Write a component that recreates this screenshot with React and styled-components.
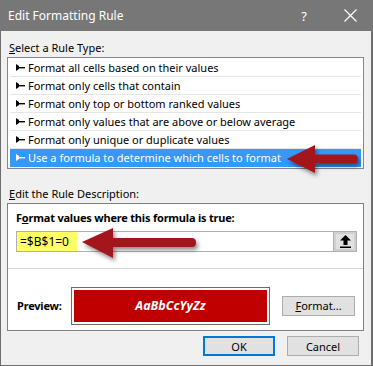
import React from 'react'
import styled, { createGlobalStyle } from 'styled-components'

const GlobalStyle = createGlobalStyle`
  html, body {
    margin: 0;
    padding: 0;
    background: #f0f0f0;
  }
  body {
    font-family: "Noto Sans", "Liberation Sans", sans-serif;
    font-size: 11px;
    color: #000;
  }
`

const rules = [
  'Format all cells based on their values',
  'Format only cells that contain',
  'Format only top or bottom ranked values',
  'Format only values that are above or below average',
  'Format only unique or duplicate values',
  'Use a formula to determine which cells to format',
]

const Bullet = ({ light }) => (
  <svg width="9" height="7" viewBox="0 0 9 7">
    <polygon points="0,0 3,2 3,5 0,7" fill={light ? '#fff' : '#000'} />
    <rect x="3" y="3" width="6" height="1.4" fill={light ? '#fff' : '#000'} />
  </svg>
)

const Arrow = ({ left, top, width, height, tip, headEnd, shaftTop, shaftBottom }) => (
  <ArrowSvg
    style={{ left, top }}
    width={width + 8}
    height={height + 8}
    viewBox={`0 0 ${width + 8} ${height + 8}`}
  >
    <defs>
      <filter id={`sh${left}`} x="-20%" y="-30%" width="150%" height="180%">
        <feDropShadow dx="2" dy="3" stdDeviation="2" floodColor="#000" floodOpacity="0.45" />
      </filter>
    </defs>
    <path
      d={`M0 ${tip} L${headEnd} 0 L${headEnd} ${shaftTop} L${width - 4} ${shaftTop}
          Q${width} ${shaftTop} ${width} ${(shaftTop + shaftBottom) / 2}
          Q${width} ${shaftBottom} ${width - 4} ${shaftBottom}
          L${headEnd} ${shaftBottom} L${headEnd} ${height} Z`}
      fill="#a3141f"
      filter={`url(#sh${left})`}
    />
  </ArrowSvg>
)

const App = () => {
  return (
    <>
      <GlobalStyle />
      <Window>
        <TitleBar>
          <Title>Edit Formatting Rule</Title>
          <Help>?</Help>
          <Close>
            <svg width="13" height="13" viewBox="0 0 13 13">
              <path d="M0.5 0.5 L12.5 12.5 M12.5 0.5 L0.5 12.5" stroke="#fff" strokeWidth="1.2" />
            </svg>
          </Close>
        </TitleBar>
        <Body>
          <Label><u>S</u>elect a Rule Type:</Label>
          <ListBox>
            {rules.map((r, i) => (
              <Row key={r} $selected={i === rules.length - 1}>
                <Bullet light={i === rules.length - 1} />
                <span>{r}</span>
              </Row>
            ))}
          </ListBox>
          <Label $gap="16px"><u>E</u>dit the Rule Description:</Label>
          <DescBox>
            <FormulaArea>
              <BoldText>F<u>o</u>rmat values where this formula is true:</BoldText>
              <InputBox>
                <Highlight>=$B$1=0</Highlight>
                <InputFill />
                <RefButton>
                  <svg width="11" height="13" viewBox="0 0 11 13">
                    <polygon points="5.5,0 11,5.5 7.5,5.5 7.5,10 3.5,10 3.5,5.5 0,5.5" fill="#000" />
                    <rect x="0" y="11.5" width="11" height="1.5" fill="#000" />
                  </svg>
                </RefButton>
              </InputBox>
            </FormulaArea>
            <PreviewArea>
              <BoldText $w="54px">Preview:</BoldText>
              <PreviewFrame>
                <PreviewSample>AaBbCcYyZz</PreviewSample>
              </PreviewFrame>
              <Button $w="73px"><u>F</u>ormat...</Button>
            </PreviewArea>
          </DescBox>
          <Footer>
            <Button $w="72px" $default>OK</Button>
            <Button $w="72px">Cancel</Button>
          </Footer>
          <Arrow left={286} top={114} width={71} height={28} tip={14} headEnd={28} shaftTop={9.5} shaftBottom={18.5} />
          <Arrow left={81} top={197} width={114} height={30} tip={14} headEnd={31} shaftTop={10} shaftBottom={19} />
        </Body>
      </Window>
    </>
  )
}

const Window = styled.div`
  width: 373px;
  height: 366px;
  box-sizing: border-box;
  display: flex;
  flex-direction: column;
  background: #f0f0f0;
  border-left: 1px solid #6d6d6d;
  border-right: 2px solid #6d6d6d;
  border-bottom: 1px solid #6d6d6d;
`

const TitleBar = styled.div`
  height: 31px;
  flex-shrink: 0;
  display: flex;
  align-items: center;
  background: #777777;
  color: #fff;
  padding-left: 8px;
  margin: 0 -2px 0 -1px;
`

const Title = styled.div`
  font-size: 12px;
  flex: 1;
`

const Help = styled.div`
  font-size: 13px;
  width: 46px;
  text-align: center;
`

const Close = styled.div`
  width: 46px;
  display: flex;
  justify-content: center;
  align-items: center;
`

const Body = styled.div`
  position: relative;
  flex: 1;
  display: flex;
  flex-direction: column;
  padding: 8px 7px 0 6px;
`

const Label = styled.div`
  padding-left: 2px;
  height: 18px;
  line-height: 18px;
  margin-top: ${(p) => p.$gap || '0'};
`

const ListBox = styled.div`
  background: #fff;
  border: 1px solid #828790;
  padding: 1px 2px;
`

const Row = styled.div`
  height: 18px;
  box-sizing: border-box;
  display: flex;
  align-items: center;
  gap: 3px;
  padding-left: 6px;
  border-bottom: 1px solid ${(p) => (p.$selected ? '#3399ff' : '#e6e6e6')};
  background: ${(p) => (p.$selected ? '#3399ff' : '#fff')};
  color: ${(p) => (p.$selected ? '#fff' : '#000')};
  white-space: nowrap;
`

const DescBox = styled.div`
  background: #fff;
  border: 1px solid #7f7f7f;
  display: flex;
  flex-direction: column;
  height: 128px;
  box-sizing: border-box;
`

const FormulaArea = styled.div`
  padding: 6px 6px 0 8px;
  height: 65px;
  flex-shrink: 0;
  box-sizing: border-box;
  border-bottom: 1px solid #d4d4d4;
`

const BoldText = styled.div`
  font-weight: 700;
  font-size: 11px;
  line-height: 16px;
  letter-spacing: -0.2px;
  white-space: nowrap;
  width: ${(p) => p.$w || 'auto'};
  flex-shrink: 0;
`

const InputBox = styled.div`
  margin-top: 5px;
  height: 21px;
  box-sizing: border-box;
  border: 1px solid #b0b0b0;
  display: flex;
  align-items: stretch;
`

const Highlight = styled.div`
  background: #ffff66;
  width: 60px;
  display: flex;
  align-items: center;
  padding-left: 3px;
  box-sizing: border-box;
  font-size: 12px;
`

const InputFill = styled.div`
  flex: 1;
`

const RefButton = styled.div`
  width: 22px;
  background: #e1e1e1;
  border-left: 1px solid #b0b0b0;
  display: flex;
  align-items: center;
  justify-content: center;
  box-shadow: inset 0 0 0 2px #cfcfcf;
`

const PreviewArea = styled.div`
  flex: 1;
  display: flex;
  align-items: center;
  padding: 12px 8px 0 9px;
`

const PreviewFrame = styled.div`
  width: 199px;
  height: 38px;
  box-sizing: border-box;
  border: 1px solid #6b6b6b;
  padding: 2px;
  display: flex;
  background: #fff;
`

const PreviewSample = styled.div`
  flex: 1;
  background: #c00000;
  color: #fff;
  font-weight: 700;
  font-style: italic;
  font-size: 12.5px;
  display: flex;
  align-items: center;
  justify-content: center;
`

const Button = styled.div`
  width: ${(p) => p.$w};
  height: 20px;
  box-sizing: border-box;
  background: #e1e1e1;
  border: ${(p) => (p.$default ? '2px solid #0078d7' : '1px solid #adadad')};
  display: flex;
  align-items: center;
  justify-content: center;
  margin-left: auto;
`

const Footer = styled.div`
  display: flex;
  justify-content: flex-end;
  gap: 12px;
  padding: 5px 5px 0 0;
  & > div {
    margin-left: 0;
  }
`

const ArrowSvg = styled.svg`
  position: absolute;
  overflow: visible;
`

export default App
